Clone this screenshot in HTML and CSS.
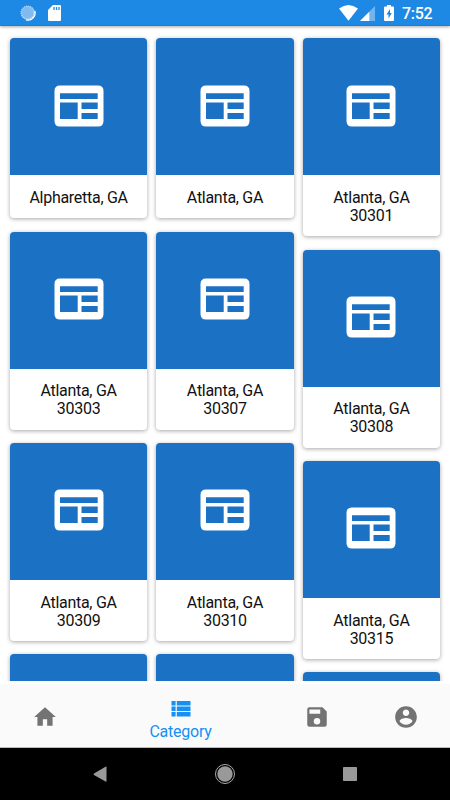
FILE: index.html
```
<!DOCTYPE html>
<html lang="en">
<head>
<meta charset="utf-8">
<title>Category</title>
<link rel="stylesheet" href="styles.css">
</head>
<body>

<svg class="defs" width="0" height="0">
	<symbol id="news" viewBox="0 0 50 42">
		<path fill="#fff" fill-rule="evenodd" d="M6 .5H44Q49.5 .5 49.5 6V36Q49.5 41.5 44 41.5H6Q.5 41.5 .5 36V6Q.5 .5 6 .5ZM6 8.3V14H43.7V8.3ZM6 17.5V34H23.7V17.5ZM27.5 17.5V24H43.7V17.5ZM27.5 28V34H43.7V28Z"/>
	</symbol>
</svg>

<div class="status">
	<svg class="spinner" width="16" height="16" viewBox="0 0 16 16">
		<circle cx="8" cy="8" r="7" fill="#7fbaf0"/>
		<circle cx="7.6" cy="7.6" r="6.4" fill="none" stroke="#b9dbf8" stroke-width="1.5" stroke-dasharray="1 1"/>
		<path d="M14.8 6A7.1 7.1 0 0 1 6 14.8" fill="none" stroke="#fff" stroke-width="1.3"/>
	</svg>
	<svg class="sd" width="13" height="16" viewBox="0 0 13 16">
		<path d="M5 0H12Q13 0 13 1V15Q13 16 12 16H1Q0 16 0 15V5Z" fill="#fff"/>
		<path d="M6 2V5M8.5 2V5M11 2V5" stroke="#1e88e5" stroke-width="1.3"/>
	</svg>
	<svg class="wifi" width="19" height="16" viewBox="0 0 19 16">
		<path d="M0 3.6Q9.5-3.4 19 3.6L9.5 15.7Z" fill="#fff"/>
	</svg>
	<svg class="signal" width="15" height="15" viewBox="0 0 15 15">
		<path d="M15 0V15H0Z" fill="#72b4ef"/>
		<path d="M9.3 5.7V15H0Z" fill="#fff"/>
	</svg>
	<svg class="battery" width="10" height="16" viewBox="0 0 10 16">
		<path d="M3 0H7V1.5H9Q10 1.5 10 2.5V15Q10 16 9 16H1Q0 16 0 15V2.5Q0 1.5 1 1.5H3Z" fill="#fff"/>
		<path d="M6 4L2.5 9.5H4.5V13.5L7.8 8H6Z" fill="#1e88e5"/>
	</svg>
	<span class="time">7:52</span>
</div>

<div class="content">
	<div class="column">
		<div class="card">
			<div class="thumb"><svg><use href="#news"/></svg></div>
			<p>Alpharetta, GA</p>
		</div>
		<div class="card">
			<div class="thumb"><svg><use href="#news"/></svg></div>
			<p>Atlanta, GA<br>30303</p>
		</div>
		<div class="card">
			<div class="thumb"><svg><use href="#news"/></svg></div>
			<p>Atlanta, GA<br>30309</p>
		</div>
		<div class="card">
			<div class="thumb"></div>
		</div>
	</div>
	<div class="column">
		<div class="card">
			<div class="thumb"><svg><use href="#news"/></svg></div>
			<p>Atlanta, GA</p>
		</div>
		<div class="card">
			<div class="thumb"><svg><use href="#news"/></svg></div>
			<p>Atlanta, GA<br>30307</p>
		</div>
		<div class="card">
			<div class="thumb"><svg><use href="#news"/></svg></div>
			<p>Atlanta, GA<br>30310</p>
		</div>
		<div class="card">
			<div class="thumb"></div>
		</div>
	</div>
	<div class="column">
		<div class="card">
			<div class="thumb"><svg><use href="#news"/></svg></div>
			<p>Atlanta, GA<br>30301</p>
		</div>
		<div class="card">
			<div class="thumb"><svg><use href="#news"/></svg></div>
			<p>Atlanta, GA<br>30308</p>
		</div>
		<div class="card">
			<div class="thumb"><svg><use href="#news"/></svg></div>
			<p>Atlanta, GA<br>30315</p>
		</div>
		<div class="card">
			<div class="thumb"></div>
		</div>
	</div>
</div>

<div class="tabs">
	<a class="tab">
		<svg width="26" height="26" viewBox="0 0 24 24"><path d="M10 20v-6h4v6h5v-8h3L12 3 2 12h3v8z"/></svg>
	</a>
	<a class="tab active">
		<svg width="20" height="16" viewBox="0 0 20 16"><path d="M.5 0H4.6V4.6H.5ZM5.8 0H19.5V4.6H5.8ZM.5 5.5H4.6V10H.5ZM5.8 5.5H19.5V10H5.8ZM.5 11H4.6V15.5H.5ZM5.8 11H19.5V15.5H5.8Z"/></svg>
		<span>Category</span>
	</a>
	<a class="tab">
		<svg width="26" height="26" viewBox="0 0 24 24"><path d="M17 3L21 7V19Q21 21 19 21H5Q3 21 3 19V5Q3 3 5 3ZM12 19a3 3 0 1 0 0-6 3 3 0 0 0 0 6ZM15 9V5H5V9Z" fill-rule="evenodd"/></svg>
	</a>
	<a class="tab">
		<svg width="26" height="26" viewBox="0 0 24 24"><path d="M12 2C6.48 2 2 6.48 2 12s4.48 10 10 10 10-4.48 10-10S17.52 2 12 2zm0 3c1.66 0 3 1.34 3 3s-1.34 3-3 3-3-1.34-3-3 1.34-3 3-3zm0 14.2c-2.5 0-4.71-1.28-6-3.22.03-1.99 4-3.08 6-3.08 1.99 0 5.97 1.09 6 3.08-1.29 1.94-3.5 3.22-6 3.22z"/></svg>
	</a>
</div>

<div class="sysbar">
	<svg width="24" height="24" viewBox="0 0 24 24"><path d="M18.5 5V19Q18.5 20 17.5 19.5L6 13Q5 12.3 6 11.6L17.5 4.8Q18.5 4.3 18.5 5Z" fill="#999"/></svg>
	<svg width="24" height="24" viewBox="0 0 24 24"><circle cx="12" cy="12" r="9.5" fill="none" stroke="#aaa"/><circle cx="12" cy="12" r="7.7" fill="#999"/></svg>
	<svg width="24" height="24" viewBox="0 0 24 24"><rect x="5" y="5" width="14" height="14" rx=".8" fill="#999"/></svg>
</div>

</body>
</html>
```

FILE: styles.css
```
body {
	display: flex;
	flex-direction: column;
	margin: 0;
	width: 450px;
	height: 800px;
	overflow: hidden;
	background-color: #fff;
	font-family: Roboto, sans-serif;
	color: #111;
}
svg {
	display: block;
}
.defs {
	position: absolute;
}
.status {
	display: flex;
	align-items: center;
	box-sizing: border-box;
	flex: none;
	height: 26px;
	padding: 0 17px 0 20px;
	background-color: #1e88e5;
	border-bottom: 1px solid #1a7fd8;
	box-shadow: 0 1px 3px rgba(0, 0, 0, .35);
}
.sd {
	margin-left: 12px;
}
.wifi {
	margin-left: auto;
}
.signal {
	margin: 1px 9px 0 2px;
}
.time {
	width: 31px;
	margin-left: 8px;
	color: #fff;
	font-size: 16px;
	font-weight: 500;
	letter-spacing: -.3px;
	line-height: 26px;
	padding-top: 2px;
}
.content {
	display: flex;
	box-sizing: border-box;
	flex: none;
	gap: 9.3px;
	height: 655px;
	padding: 12.3px 10px 0;
	overflow: hidden;
}
.column {
	display: flex;
	flex-direction: column;
	flex: 1;
	gap: 13.4px;
}
.card {
	flex: none;
	border-radius: 4px;
	background-color: #fff;
	box-shadow: 0 1px 4px rgba(0, 0, 0, .35);
}
.thumb {
	box-sizing: border-box;
	height: 137px;
	padding: 46.4px 0 0 43.5px;
	border-radius: 4px 4px 0 0;
	background-color: #1b71c3;
}
.thumb svg {
	width: 50px;
	height: 42px;
}
.card p {
	margin: 0;
	padding: 13.6px 0 11.4px;
	font-size: 16px;
	letter-spacing: -.28px;
	line-height: 18px;
	text-align: center;
}
.tabs {
	display: grid;
	grid-template-columns: 89px 183px 89px 89px;
	box-sizing: border-box;
	flex: none;
	height: 64px;
	margin-top: 3px;
	background-color: #fafafa;
	border-bottom: 1px solid #bbb;
}
.tab {
	display: flex;
	flex-direction: column;
	align-items: center;
	justify-content: center;
	padding-top: 2px;
	color: #737373;
}
.tab svg {
	fill: currentColor;
}
.active {
	padding-top: 12px;
	color: #1590f5;
}
.active span {
	margin-top: 4px;
	font-size: 16px;
	letter-spacing: -.25px;
	line-height: 22px;
}
.sysbar {
	display: flex;
	align-items: center;
	justify-content: space-around;
	flex: 1;
	padding: 0 38px 1px;
	background-color: #000;
}
```
